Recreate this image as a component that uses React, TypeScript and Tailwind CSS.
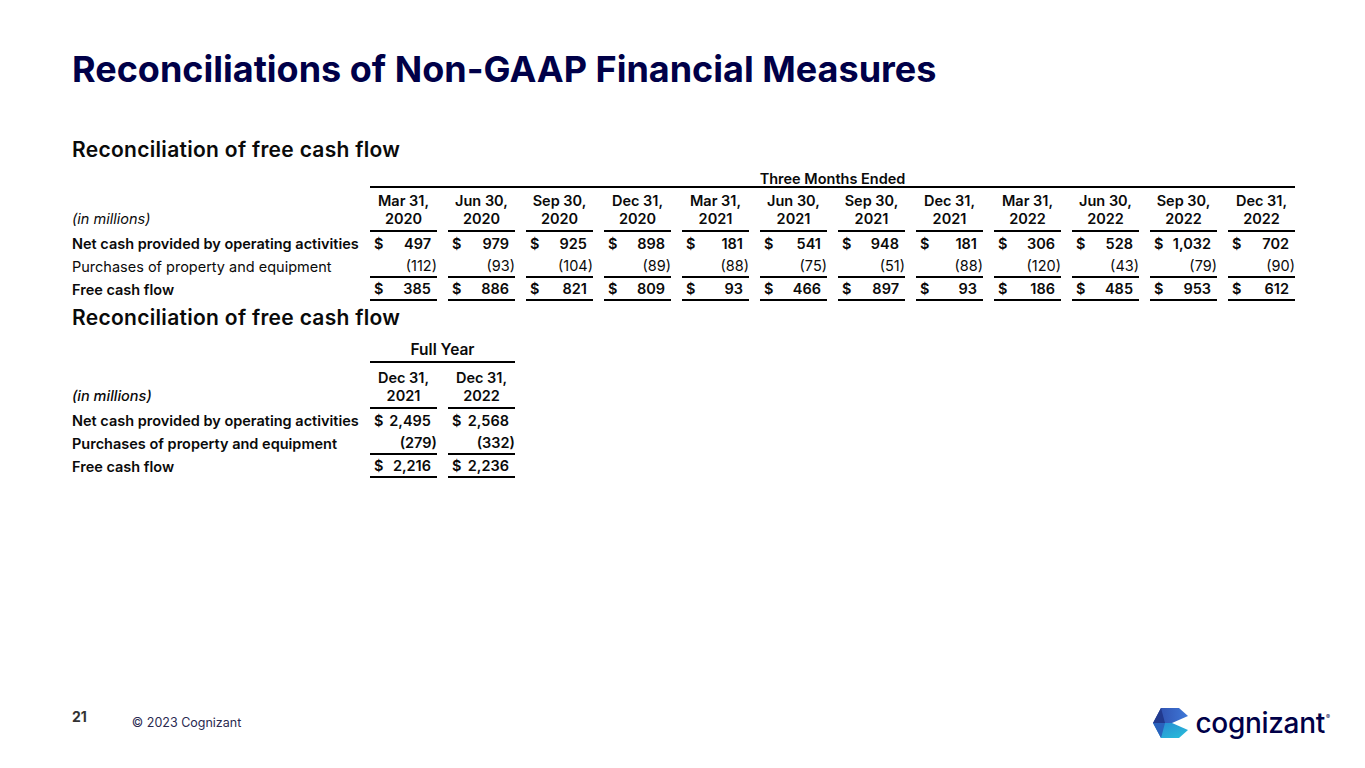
const quarters = [
  ['Mar 31,', '2020'],
  ['Jun 30,', '2020'],
  ['Sep 30,', '2020'],
  ['Dec 31,', '2020'],
  ['Mar 31,', '2021'],
  ['Jun 30,', '2021'],
  ['Sep 30,', '2021'],
  ['Dec 31,', '2021'],
  ['Mar 31,', '2022'],
  ['Jun 30,', '2022'],
  ['Sep 30,', '2022'],
  ['Dec 31,', '2022'],
];

const qRows = [
  { label: 'Net cash provided by operating activities', bold: true, dollar: true, line: false, values: ['497', '979', '925', '898', '181', '541', '948', '181', '306', '528', '1,032', '702'] },
  { label: 'Purchases of property and equipment', bold: false, dollar: false, line: true, values: ['(112)', '(93)', '(104)', '(89)', '(88)', '(75)', '(51)', '(88)', '(120)', '(43)', '(79)', '(90)'] },
  { label: 'Free cash flow', bold: true, dollar: true, line: true, values: ['385', '886', '821', '809', '93', '466', '897', '93', '186', '485', '953', '612'] },
];

const yRows = [
  { label: 'Net cash provided by operating activities', dollar: true, line: false, values: ['2,495', '2,568'] },
  { label: 'Purchases of property and equipment', dollar: false, line: true, values: ['(279)', '(332)'] },
  { label: 'Free cash flow', dollar: true, line: true, values: ['2,216', '2,236'] },
];

function Amount({ value, dollar, line }: { value: string; dollar: boolean; line: boolean }) {
  const neg = value.startsWith('(');
  return (
    <div className={`flex h-[23px] items-center justify-between ${line ? 'border-b-[2px] border-black' : ''}`}>
      <span className="pl-[4px]">{dollar ? '$' : ''}</span>
      <span className={neg ? '' : 'pr-[6px]'}>{value}</span>
    </div>
  );
}

// hexagon mark with the white notch cut in from the right
function Logo() {
  return (
    <div className="flex items-center">
      <svg width="36" height="32" viewBox="0 0 36 32">
        <defs>
          <linearGradient id="lgTop" x1="0" y1="0" x2="1" y2="0">
            <stop offset="0" stopColor="#2d4aa8" />
            <stop offset="1" stopColor="#3f78d8" />
          </linearGradient>
          <linearGradient id="lgBot" x1="0" y1="0" x2="1" y2="1">
            <stop offset="0" stopColor="#2a86d2" />
            <stop offset="1" stopColor="#27c0da" />
          </linearGradient>
        </defs>
        <polygon points="0,16 8,1 26,1 35,9 19,16" fill="url(#lgTop)" />
        <polygon points="0,16 19,16 35,23 26,31 8,31" fill="url(#lgBot)" />
        <polygon points="0,16 8,1 12,16" fill="#223a8e" />
        <polygon points="0,16 12,16 8,31" fill="#2a62bd" />
      </svg>
      <span className="ml-[6px] text-[28px] font-medium leading-none tracking-[-0.3px] text-[#000048]">cognizant</span>
      <span className="-mt-[14px] ml-[1px] text-[6px] text-[#000048]">®</span>
    </div>
  );
}

export default function App() {
  return (
    <div className="relative flex h-[768px] w-[1365px] flex-col bg-white font-['Inter',sans-serif] text-[#0a0a0a]">
      <h1 className="ml-[72px] mt-[47px] text-[36px] font-bold leading-[44px] text-[#000048]">
        Reconciliations of Non-GAAP Financial Measures
      </h1>

      <h2 className="ml-[72px] mt-[46px] text-[21px] font-semibold leading-[26px] tracking-[0.3px]">
        Reconciliation of free cash flow
      </h2>

      <div className="ml-[72px] mt-[9px] grid grid-cols-[287px_repeat(12,67px)] gap-x-[11px] text-[14.5px] leading-[18px]">
        <div />
        <div className="col-span-12 border-b-[2px] border-black text-center font-semibold leading-[14px]">Three Months Ended</div>

        <div className="flex items-end pb-[4px] italic">(in millions)</div>
        {quarters.map((q, i) => (
          <div key={i} className="border-b-[2px] border-black pb-[2px] pt-[4px] text-center font-semibold">
            <div>{q[0]}</div>
            <div>{q[1]}</div>
          </div>
        ))}

        {qRows.map((r) => (
          <>
            <div key={r.label} className={`flex h-[23px] items-center ${r.bold ? 'font-semibold' : ''}`}>{r.label}</div>
            {r.values.map((v, i) => (
              <div key={r.label + i} className={r.bold ? 'font-semibold' : ''}>
                <Amount value={v} dollar={r.dollar} line={r.line} />
              </div>
            ))}
          </>
        ))}
      </div>

      <h2 className="ml-[72px] mt-[4px] text-[21px] font-semibold leading-[26px] tracking-[0.3px]">
        Reconciliation of free cash flow
      </h2>

      <div className="ml-[72px] mt-[10px] grid grid-cols-[287px_repeat(2,67px)] gap-x-[11px] text-[14.5px] leading-[18px]">
        <div />
        <div className="col-span-2 border-b-[2px] border-black pb-[2px] text-center text-[15.5px] font-semibold">Full Year</div>

        <div className="flex items-end pb-[4px] font-medium italic">(in millions)</div>
        {[['Dec 31,', '2021'], ['Dec 31,', '2022']].map((q, i) => (
          <div key={i} className="border-b-[2px] border-black pb-[2px] pt-[6px] text-center font-semibold">
            <div>{q[0]}</div>
            <div>{q[1]}</div>
          </div>
        ))}

        {yRows.map((r) => (
          <>
            <div key={r.label} className="flex h-[23px] items-center font-semibold">{r.label}</div>
            {r.values.map((v, i) => (
              <div key={r.label + i} className="font-semibold">
                <Amount value={v} dollar={r.dollar} line={r.line} />
              </div>
            ))}
          </>
        ))}
      </div>

      <div className="mt-auto flex items-center justify-between pb-[29px] pl-[72px] pr-[35px]">
        <div className="-mt-[6px] flex items-start">
          <span className="text-[14px] font-bold leading-[16px] text-[#333]">21</span>
          <span className="ml-[45px] mt-[6px] text-[12.5px] leading-[16px] text-[#2a2a50]">© 2023 Cognizant</span>
        </div>
        <Logo />
      </div>
    </div>
  );
}
